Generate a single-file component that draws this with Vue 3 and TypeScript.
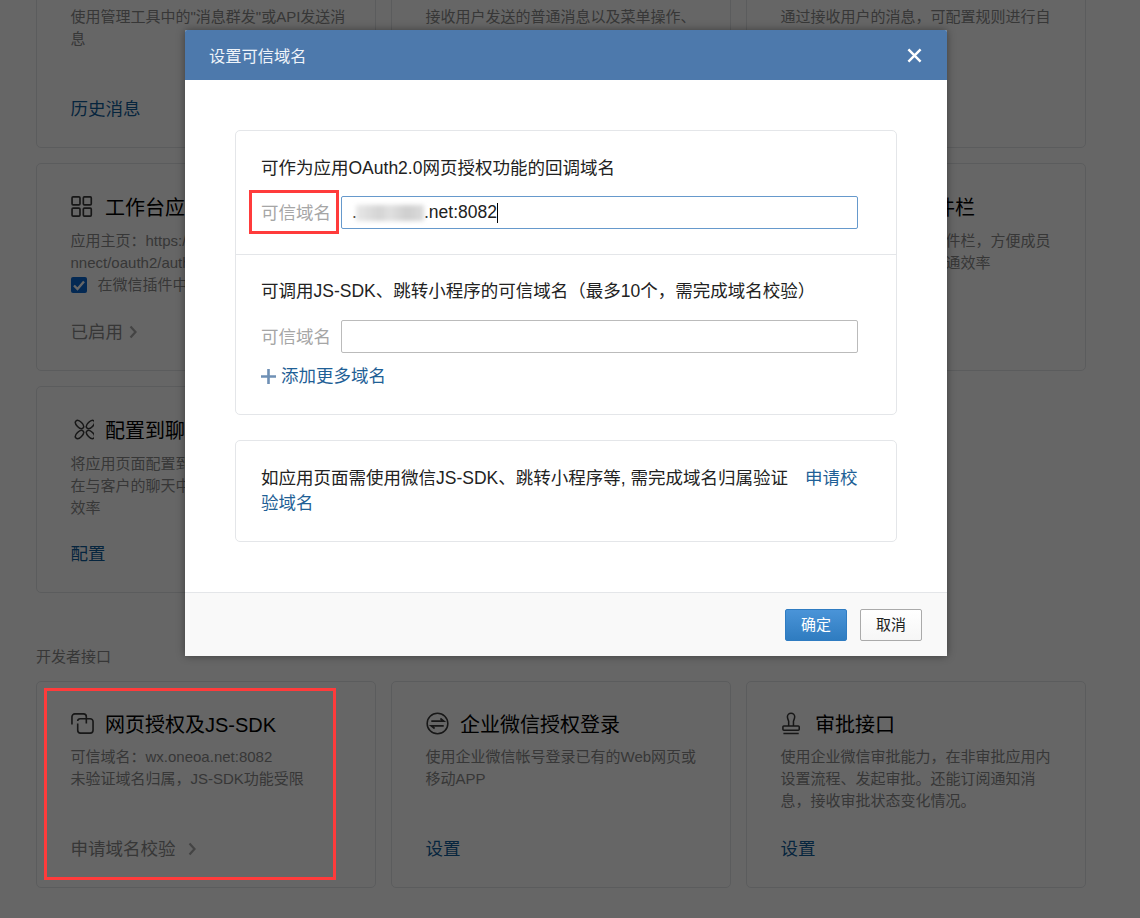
<script setup lang="ts">
interface Card {
  icon?: string
  title: string
  lines: string[]
  check?: string
  action: string
  muted?: boolean
  arrow?: boolean
  wide?: boolean
}

const rows: Card[][] = [
  [
    { title: '消息群发', lines: ['使用管理工具中的"消息群发"或API发送消', '息'], action: '历史消息' },
    { title: '接收消息', lines: ['接收用户发送的普通消息以及菜单操作、', '进入应用等事件'], action: '设置' },
    { title: '自动回复', lines: ['通过接收用户的消息\uFF0C可配置规则进行自', '动回复'], action: '设置' },
  ],
  [
    {
      icon: 'grid',
      title: '工作台应用主页',
      lines: ['应用主页\uFF1Ahttps://open.weixin.qq.com/co', 'nnect/oauth2/authorize?appid=wx'],
      check: '在微信插件中隐藏应用',
      action: '已启用',
      muted: true,
      arrow: true,
    },
    { icon: 'petal', title: '小程序', lines: ['关联小程序后可在工作台打开'], action: '设置' },
    {
      icon: 'grid',
      title: '配置到微信插件栏',
      lines: ['将应用页面配置到聊天插件栏\uFF0C方便成员', '在聊天时使用\uFF0C可提升沟通效率'],
      action: '配置',
    },
  ],
  [
    {
      icon: 'petal',
      title: '配置到聊天工具栏',
      lines: ['将应用页面配置到聊天工具栏\uFF0C方便成员', '在与客户的聊天中使用\uFF0C提升服务的沟通', '效率'],
      action: '配置',
    },
    { icon: 'grid', title: '配置到客户详情', lines: ['将应用页面配置到客户详情页'], action: '配置' },
  ],
]

const apiRow: Card[] = [
  {
    icon: 'copy',
    title: '网页授权及JS-SDK',
    lines: ['可信域名\uFF1Awx.oneoa.net:8082', '未验证域名归属\uFF0CJS-SDK功能受限'],
    action: '申请域名校验',
    muted: true,
    arrow: true,
    wide: true,
  },
  {
    icon: 'swap',
    title: '企业微信授权登录',
    lines: ['使用企业微信帐号登录已有的Web网页或', '移动APP'],
    action: '设置',
  },
  {
    icon: 'stamp',
    title: '审批接口',
    lines: ['使用企业微信审批能力\uFF0C在非审批应用内', '设置流程、发起审批。还能订阅通知消', '息\uFF0C接收审批状态变化情况。'],
    action: '设置',
  },
]

const sections = [
  { rows, cls: 'first' },
  { rows: [apiRow], cls: 'api' },
]

const jsSdkHint = '可调用JS-SDK、跳转小程序的可信域名\uFF08最多10个\uFF0C需完成域名校验\uFF09'
</script>

<template>
  <div class="page">
    <template v-for="section in sections" :key="section.cls">
      <div v-if="section.cls === 'api'" class="section-label">开发者接口</div>
      <div class="rows" :class="section.cls">
        <div v-for="(row, i) in section.rows" :key="i" class="row">
          <div v-for="card in row" :key="card.title" class="card">
            <div class="card-title">
              <svg v-if="card.icon === 'grid'" class="icon" viewBox="0 0 22 22" fill="none" stroke="#3a3a3a" stroke-width="1.6">
                <rect x="1" y="1.8" width="7.6" height="7.6" rx="1" />
                <rect x="11.8" y="1.8" width="7.6" height="7.6" rx="1" />
                <rect x="1" y="12.6" width="7.6" height="7.6" rx="1" />
                <rect x="11.8" y="12.6" width="7.6" height="7.6" rx="1" />
              </svg>
              <svg v-else-if="card.icon === 'petal'" class="icon" viewBox="0 0 23 23" fill="none" stroke="#3a3a3a" stroke-width="1.5">
                <ellipse cx="8.5" cy="6.5" rx="5" ry="2.8" transform="rotate(45 8.5 6.5)" />
                <ellipse cx="19.5" cy="6.5" rx="5" ry="2.8" transform="rotate(-45 19.5 6.5)" />
                <ellipse cx="8.5" cy="16.5" rx="5" ry="2.8" transform="rotate(-45 8.5 16.5)" />
                <ellipse cx="19.5" cy="16.5" rx="5" ry="2.8" transform="rotate(45 19.5 16.5)" />
              </svg>
              <svg v-else-if="card.icon === 'copy'" class="icon" viewBox="0 0 24 24" fill="none" stroke="#3a3a3a" stroke-width="1.7">
                <path d="M1 13 V5 a3 3 0 0 1 3-3 H13 a3 3 0 0 1 3 3 V12" />
                <path d="M7 12 V19 a3 3 0 0 0 3 3 H20 a3 3 0 0 0 3-3 V10 a3 3 0 0 0-3-3 H9.5 a2.5 2.5 0 0 0-2.5 2.5" />
              </svg>
              <svg v-else-if="card.icon === 'swap'" class="icon" viewBox="0 0 24 24" fill="none" stroke="#3a3a3a" stroke-width="1.6">
                <circle cx="12" cy="12" r="10.8" />
                <path d="M5.5 9.6 H18.5 L15 6.8 M18.5 14.4 H5.5 L9 17.2" stroke-width="1.8" />
              </svg>
              <svg v-else-if="card.icon === 'stamp'" class="icon" viewBox="0 0 24 24" fill="none" stroke="#3a3a3a" stroke-width="1.6">
                <path d="M8 14.5 V10 C8 8.5 6.7 7.5 6.7 5 A3.8 3.8 0 0 1 14.3 5 C14.3 7.5 13 8.5 13 10 V14.5" />
                <rect x="2" y="14.5" width="17" height="4.5" rx="1" />
                <path d="M2.5 22.5 H18.5" />
              </svg>
              <span>{{ card.title }}</span>
            </div>
            <div class="card-desc">
              <div v-for="line in card.lines" :key="line" class="desc-line">{{ line }}</div>
              <label v-if="card.check" class="check-line">
                <span class="checkbox">
                  <svg viewBox="0 0 16 16" fill="none" stroke="#fff" stroke-width="2.4">
                    <path d="M3 8.5 L6.5 12 L13 4.5" />
                  </svg>
                </span>
                {{ card.check }}
              </label>
            </div>
            <div class="card-action" :class="{ muted: card.muted, wide: card.wide }">
              {{ card.action }}
              <svg v-if="card.arrow" class="chevron" viewBox="0 0 8 14" fill="none" stroke="#aaa" stroke-width="2.2">
                <path d="M1.5 1.5 L6.5 7 L1.5 12.5" />
              </svg>
            </div>
          </div>
        </div>
      </div>
    </template>

    <div class="overlay"></div>
    <div class="mark mark-card"></div>

    <div class="dialog">
      <div class="dialog-head">
        <span>设置可信域名</span>
        <svg class="close" viewBox="0 0 16 16" fill="none" stroke="#fff" stroke-width="2.6">
          <path d="M1.5 1.5 L14.5 14.5 M14.5 1.5 L1.5 14.5" />
        </svg>
      </div>

      <div class="dialog-body">
        <div class="box">
          <div class="box-section">
            <div class="box-text">可作为应用OAuth2.0网页授权功能的回调域名</div>
            <div class="field">
              <span class="field-label marked">可信域名</span>
              <div class="input focus">
                <span class="dot">.</span><span class="smudge"></span><span>.net:8082</span><span class="caret"></span>
              </div>
            </div>
          </div>
          <div class="box-section second">
            <div class="box-text">{{ jsSdkHint }}</div>
            <div class="field">
              <span class="field-label">可信域名</span>
              <div class="input"></div>
            </div>
            <a class="add-more">
              <svg viewBox="0 0 15 15" fill="none" stroke="#6f90b5" stroke-width="2.6">
                <path d="M7.5 0 V15 M0 7.5 H15" />
              </svg>
              添加更多域名
            </a>
          </div>
        </div>

        <div class="box note">
          如应用页面需使用微信JS-SDK、跳转小程序等, 需完成域名归属验证<a class="apply">申请校验域名</a>
        </div>
      </div>

      <div class="dialog-foot">
        <button class="btn primary">确定</button>
        <button class="btn">取消</button>
      </div>
    </div>
  </div>
</template>

<style>
html,
body {
  margin: 0;
  overflow: hidden;
}
</style>

<style scoped>
.page {
  position: relative;
  width: 1140px;
  height: 918px;
  overflow: hidden;
  background: #fff;
  font-family: "Liberation Sans", "Noto Sans CJK SC", sans-serif;
  color: #222;
}

.rows {
  display: flex;
  flex-direction: column;
  gap: 15px;
  padding: 0 54px 0 36px;
}

.rows.first {
  margin-top: -61px;
}

.row {
  display: flex;
  gap: 15px;
}

.card {
  box-sizing: border-box;
  width: 340px;
  height: 207px;
  flex: none;
  padding: 29px 0 26px 33.5px;
  border: 1px solid #e4e6e9;
  border-radius: 5px;
  display: flex;
  flex-direction: column;
  overflow: hidden;
}

.first .row:nth-child(1) .card {
  height: 209px;
}

.first .row:nth-child(2) .card {
  height: 208px;
}

.api .card {
  padding-top: 28px;
}

.card-title {
  display: flex;
  align-items: center;
  gap: 11.5px;
  height: 26px;
  font-size: 20px;
  color: #000;
  white-space: nowrap;
}

.icon {
  width: 23px;
  height: 23px;
  flex: none;
}

.card-desc {
  margin-top: 11px;
  font-size: 15px;
  line-height: 22px;
  color: #8a8a8a;
  white-space: nowrap;
}

.api .card-desc {
  margin-top: 10px;
}

.check-line {
  display: flex;
  align-items: center;
  gap: 11px;
}

.checkbox {
  display: flex;
  width: 16px;
  height: 16px;
  border-radius: 2px;
  background: #0a66d0;
}

.card-action {
  margin-top: auto;
  display: flex;
  align-items: center;
  gap: 6px;
  font-size: 17.5px;
  line-height: 24px;
  color: #0f5c9c;
}

.card-action.muted {
  color: #8a8a8a;
}

.card-action.wide {
  gap: 12px;
}

.chevron {
  width: 8px;
  height: 14px;
}

.section-label {
  margin: 52px 0 0 36px;
  height: 36px;
  line-height: 24px;
  font-size: 15px;
  color: #8a8a8a;
}

.overlay {
  position: absolute;
  inset: 0;
  background: rgba(0, 0, 0, 0.6);
}

.mark {
  position: absolute;
  box-sizing: border-box;
  border: 3px solid #ff3b3b;
}

.mark-card {
  left: 44px;
  top: 688px;
  width: 292px;
  height: 192px;
}

.dialog {
  position: absolute;
  left: 185px;
  top: 30px;
  width: 762px;
  height: 626px;
  display: flex;
  flex-direction: column;
  background: #fff;
  border-radius: 2px;
  box-shadow: 0 0 8px rgba(0, 0, 0, 0.4);
}

.dialog-head {
  flex: none;
  height: 50px;
  padding: 0 25px 0 24px;
  display: flex;
  align-items: center;
  justify-content: space-between;
  background: #4d79ac;
  color: #eef3f9;
  font-size: 16.25px;
  border-radius: 2px 2px 0 0;
}

.close {
  width: 15px;
  height: 15px;
}

.dialog-body {
  flex: 1;
  padding: 50px;
  display: flex;
  flex-direction: column;
  gap: 25px;
}

.box {
  border: 1px solid #e4e6e9;
  border-radius: 5px;
  font-size: 17.5px;
  color: #222;
}

.box-section {
  padding: 25px;
}

.box-section.second {
  padding-top: 24px;
  padding-bottom: 26px;
  border-top: 1px solid #e4e6e9;
}

.box-text {
  line-height: 24px;
  white-space: nowrap;
}

.field {
  margin-top: 16px;
  display: flex;
  align-items: center;
  gap: 10px;
}

.second .field {
  margin-top: 17px;
}

.field-label {
  position: relative;
  flex: none;
  width: 70px;
  height: 24px;
  line-height: 24px;
  color: #a6a6a6;
  white-space: nowrap;
}

.field-label.marked::after {
  content: "";
  position: absolute;
  left: -12px;
  top: -10.5px;
  width: 90px;
  height: 44px;
  box-sizing: border-box;
  border: 3px solid #ff3b3b;
}

.input {
  box-sizing: border-box;
  width: 517px;
  height: 33px;
  padding-left: 10px;
  display: flex;
  align-items: center;
  border: 1px solid #bbb;
  border-radius: 2px;
  color: #222;
}

.input.focus {
  border-color: #6699cc;
}

.dot {
  width: 4px;
}

.smudge {
  width: 68px;
  height: 16px;
  background: linear-gradient(90deg, #e8e8e8, #d4d4d4 35%, #e0e0e0 50%, #cecece 75%, #dcdcdc);
  filter: blur(2px);
}

.caret {
  width: 1px;
  height: 20px;
  background: #000;
}

.add-more {
  margin-top: 11px;
  display: flex;
  align-items: center;
  gap: 5px;
  line-height: 24px;
  color: #1f5f96;
}

.add-more svg {
  width: 15px;
  height: 15px;
}

.note {
  padding: 25px 38px 25px 25px;
  line-height: 25px;
}

.apply {
  margin-left: 17px;
  color: #1f5f96;
}

.dialog-foot {
  flex: none;
  box-sizing: border-box;
  height: 64px;
  padding: 16px 25px 0 0;
  display: flex;
  justify-content: flex-end;
  gap: 13px;
  background: #f9f9f9;
  border-top: 1px solid #e4e6e9;
}

.btn {
  box-sizing: border-box;
  width: 62px;
  height: 32px;
  padding: 0 0 3px;
  border: 1px solid #aaa;
  border-radius: 2px;
  background: linear-gradient(#fff, #f6f6f6);
  font-family: inherit;
  font-size: 15px;
  color: #222;
}

.btn.primary {
  border-color: #2f7cc2;
  background: linear-gradient(#4a94d8, #2f7cc0);
  color: #fff;
}
</style>
